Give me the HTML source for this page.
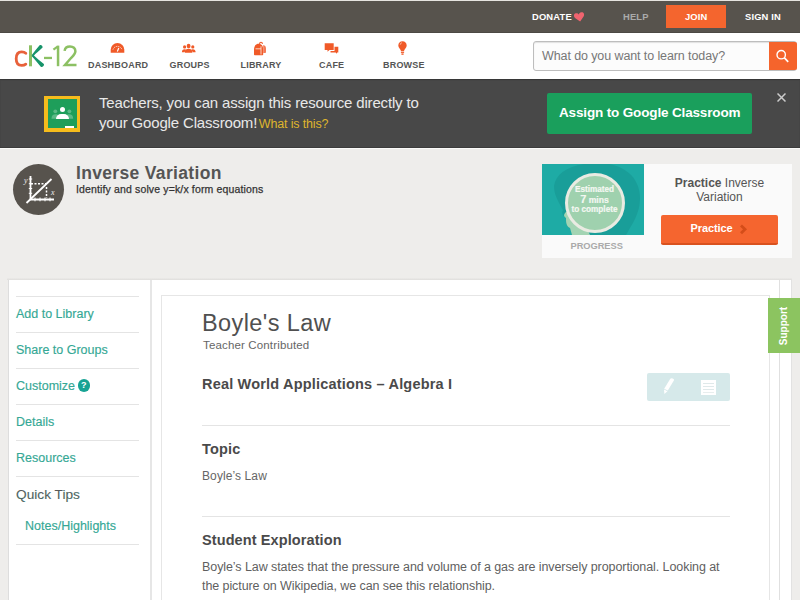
<!DOCTYPE html>
<html><head><meta charset="utf-8">
<style>
*{margin:0;padding:0;box-sizing:border-box}
html,body{width:800px;height:600px;overflow:hidden;background:#eeedeb;font-family:"Liberation Sans",sans-serif}
.a{position:absolute;white-space:nowrap}
#top{position:absolute;left:0;top:0;width:800px;height:33px;background:#57534d;border-top:1px solid #e6e4e0;box-shadow:inset 0 -1px 0 #4c4944;z-index:1}
.t{position:absolute;top:9.8px;font-size:9.4px;letter-spacing:.15px;font-weight:bold;color:#fff;line-height:11px}
#join{position:absolute;left:666px;top:4px;border-radius:0;width:60px;height:23px;background:#f4652e}
#nav{position:absolute;left:0;top:32px;width:800px;height:47px;background:#fff}
.ni{position:absolute;top:28px;font-size:9px;letter-spacing:.2px;font-weight:bold;color:#555;line-height:11px}
.ic{position:absolute}
#search{position:absolute;left:533px;top:41px;width:264px;height:30px;border:1px solid #bdbdbd;border-radius:3px;background:#fcfcfc;box-shadow:inset 0 1px 1px #e0e0e0}
#sbtn{position:absolute;left:769px;top:42px;width:28px;height:28px;background:#f5642c;border-radius:0 2px 2px 0}
#banner{position:absolute;left:0;top:79px;width:800px;height:69px;background:#484848;box-shadow:inset 0 1px 1px #363636,inset 0 -1px 0 #3c3c3c}
#green{position:absolute;left:547px;top:93px;width:205px;height:41px;background:#1a9f5c;border-radius:2px}
.sl{position:absolute;left:16px;font-size:12.5px;color:#35a895;line-height:14px;-webkit-text-stroke:0.15px #35a895}
.hr{position:absolute;height:1px;background:#e4e4e4}
</style></head><body>

<div id="top">
  <div class="t" id="donate" style="left:532px">DONATE</div>
  <svg class="ic" style="left:573.8px;top:11.3px;transform:rotate(-12deg)" width="11" height="10" viewBox="0 0 11 10"><path d="M5.2 9.6 L1.2 5.3 C-0.4 3.5 0.2 0.6 2.7 0.6 C4 0.6 4.8 1.4 5.4 2.3 C6 1.4 6.9 0.8 8.1 0.8 C10.5 0.8 11.3 3.5 9.8 5.2 Z" fill="#f0646f"/></svg>
  <div class="t" id="help" style="left:623px;color:#aaa">HELP</div>
  <div id="join"></div>
  <div class="t" id="jointxt" style="left:685px">JOIN</div>
  <div class="t" id="signin" style="left:745px">SIGN IN</div>
</div>

<div id="nav">
  <!-- logo -->
  <svg class="ic" style="left:10px;top:8px" width="70" height="30" viewBox="10 40 70 30">
    <path d="M25.8 53.2 C24.8 52.3 23.3 51.9 21.7 51.9 C17.9 51.9 16.2 55 16.2 58.8 C16.2 62.6 17.9 65.4 21.7 65.4 C23.3 65.4 24.8 65 25.8 64.2" stroke="#e8613a" stroke-width="2.8" fill="none" stroke-linecap="round"/>
    <rect x="29" y="45.3" width="3" height="21" fill="#8cc063"/>
    <path d="M39.6 45.3 C40.8 44.5 42.8 45.3 42.6 47.6 C39.5 50.5 35.8 53.5 33.2 56.4 L31.6 55.3 C34 52 36.8 48.5 39.6 45.3 Z" fill="#16936a"/><path d="M31.6 56 L33.1 54.7 C36.5 58 40 61 43.9 64 C44.6 65.5 42.6 67.3 41 66.9 C38 63.5 35 59.5 31.6 56 Z" fill="#16936a"/>
    <rect x="44" y="56.8" width="8" height="2.3" fill="#8cc063"/>
    <rect x="56.8" y="45.6" width="2.5" height="20.6" fill="#8cc063"/>
    <path d="M57.6 46.6 L53.4 49.6" stroke="#8cc063" stroke-width="2.2" fill="none"/>
    <path d="M64.6 50.8 C65 47.8 67.3 46.4 70 46.4 C73.3 46.4 75.4 48.4 75.4 51.2 C75.4 53.8 73.4 55.6 71 58 L65 64.9 L76.5 64.9" stroke="#8cc063" stroke-width="2.5" fill="none" stroke-linejoin="miter"/>
  </svg>

    <div class="ni" id="n1" style="left:88px">DASHBOARD</div>
    <div class="ni" id="n2" style="left:169.5px">GROUPS</div>
  <div class="ni" id="n3" style="left:240.5px">LIBRARY</div>
  <div class="ni" id="n4" style="left:319px">CAFE</div>
  <div class="ni" id="n5" style="left:383px">BROWSE</div>
</div>

<svg class="ic" style="left:100px;top:36px" width="320" height="24" viewBox="100 36 320 24">
  <g fill="#f05a28">
    <path d="M110.7 52.8 V49.8 A6.8 6.8 0 0 1 124.3 49.8 V52.8 Z"/>
    <ellipse cx="188.6" cy="46" rx="1.9" ry="2.3"/>
    <path d="M184.8 52.8 C184.8 49.8 186.2 48.8 188.6 48.8 C191 48.8 192.4 49.8 192.4 52.8Z"/>
    <circle cx="184.6" cy="46.9" r="1.6"/>
    <path d="M181.9 52.3 C181.9 50 182.8 49.2 184.6 49.2 C185.5 49.2 186 49.5 186.2 50 L184.4 52.3Z"/>
    <circle cx="192.8" cy="46.9" r="1.6"/>
    <path d="M195.6 52.3 C195.6 50 194.6 49.2 192.8 49.2 C191.9 49.2 191.4 49.5 191.2 50 L193 52.3Z"/>
    <path d="M254 50 C254 46 255.8 43.8 258.6 43.8 C261.6 43.8 263.2 46 263.2 50 V54.3 C263.2 55 262.7 55.3 262 55.3 H255.2 C254.5 55.3 254 55 254 54.3Z"/>
    <path d="M263.2 45 C265 45.3 266 46.5 266 48.5 V52.3 C266 52.8 265.6 53 265 53 H263.2Z" fill="#f47a55"/>
    <path d="M259.6 43.9 C259.6 41.7 262.4 41.7 262.4 43.9" stroke="#f05a28" stroke-width="1.1" fill="none"/>
    <path d="M324.7 43.3 H333.7 V49.9 H329.5 L327.5 51.8 V49.9 H324.7Z"/>
    <path d="M334.5 46.7 H338.3 V52.5 H337 V53.8 L335.6 52.5 H330.5 V51 H334.5Z"/>
    <path d="M402.5 41.3 C400 41.3 398.3 43.2 398.3 45.5 C398.3 47.8 400.4 49 401 51 H404 C404.6 49 406.7 47.8 406.7 45.5 C406.7 43.2 405 41.3 402.5 41.3Z"/>
    <rect x="400.9" y="51.6" width="3.2" height="1.3"/>
    <rect x="401.4" y="53.4" width="2.2" height="1.4"/>
  </g>
  <path d="M113 49.5 A4.8 4.8 0 0 1 122 49.5" stroke="#fff" stroke-width="0.9" stroke-dasharray="1 1" fill="none"/>
  <path d="M117.3 51.5 L118.8 48" stroke="#fff" stroke-width="1.2"/>
  <path d="M255.5 48.8 H261 M261 46.3 V54.5" stroke="#fde0d0" stroke-width="0.9" fill="none"/>
  <path d="M400.3 44.6 C400.3 43.6 401 43 401.8 42.8" stroke="#fcd3c0" stroke-width="0.9" fill="none"/>
</svg>
<div id="search"><div class="a" id="ph" style="left:8px;top:7px;font-size:12.5px;letter-spacing:-0.1px;color:#777">What do you want to learn today?</div></div>
<div id="sbtn"><svg class="ic" style="left:7px;top:7px" width="14" height="14" viewBox="0 0 14 14"><circle cx="5.2" cy="5.7" r="4.2" stroke="#fff" stroke-width="1.4" fill="none"/><path d="M8.2 8.7 L12.2 12.8" stroke="#fff" stroke-width="1.7"/></svg></div>

<div id="banner">
  <div class="a" style="left:44px;top:17px;width:36px;height:35.5px;background:#f6bc1c"></div>
  <div class="a" style="left:48px;top:20px;width:28.5px;height:29px;background:#1e9e5a"></div>
  <svg class="ic" style="left:48px;top:20px" width="29" height="29" viewBox="48 99 29 29"><circle cx="55.3" cy="111.3" r="1.9" fill="#5cb986"/><circle cx="69.4" cy="111.3" r="1.9" fill="#5cb986"/><path d="M51.5 118.8 C51.5 115.5 53 114.3 55.5 114.3 C57 114.3 58 114.8 58.5 115.6 L57 118.8Z M73.2 118.8 C73.2 115.5 71.7 114.3 69.2 114.3 C67.7 114.3 66.7 114.8 66.2 115.6 L67.7 118.8Z" fill="#5cb986"/></svg>
  <div class="a" style="left:59.5px;top:27.5px;width:5px;height:5px;border-radius:50%;background:#fff"></div>
  <div class="a" style="left:56px;top:34.5px;width:12.5px;height:5px;border-radius:6px 6px 0 0;background:#fff"></div>
  <div class="a" style="left:65px;top:47px;width:8.5px;height:2px;background:#fff"></div>
  <div class="a" id="bt" style="left:99px;top:14px;font-size:15px;letter-spacing:-0.16px;color:#e8e8e8;line-height:20px">Teachers, you can assign this resource directly to<br>your Google Classroom!&nbsp;<span style="color:#dfb52d;font-size:12.5px;letter-spacing:-0.15px;margin-left:-2.5px">What is this?</span></div>
  <svg class="ic" style="left:777px;top:14px" width="9" height="9" viewBox="0 0 9 9"><path d="M0.5 0.5 L8.5 8.5 M8.5 0.5 L0.5 8.5" stroke="#ccc" stroke-width="1.5"/></svg>
</div>
<div id="green"><div class="a" id="gt" style="left:12px;top:12px;font-size:13.5px;letter-spacing:-0.15px;font-weight:bold;color:#fff">Assign to Google Classroom</div></div>

<div class="a" style="left:0;top:148px;width:800px;height:1px;background:#fafaf9"></div>
<!-- header -->
<div class="a" style="left:13px;top:164px;width:51px;height:51px;border-radius:50%;background:#57534d"></div>
<svg class="ic" style="left:13px;top:164px" width="51" height="51" viewBox="0 0 51 51">
  <path d="M17.5 12 V35.5 H41" stroke="#fff" stroke-width="1.8" fill="none"/>
  <path d="M13.5 39 L38.5 15" stroke="#fff" stroke-width="1.8" fill="none"/>
  <path d="M18 19.7 H33" stroke="#fff" stroke-width="1.5" stroke-dasharray="2 1.5" fill="none"/>
  <path d="M33.5 23 V34" stroke="#fff" stroke-width="1.5" stroke-dasharray="2 1.5" fill="none"/>
  <path d="M15.8 15 H19.2 M15.8 19.7 H19.2 M15.8 24.5 H19.2 M15.8 29.3 H19.2 M22 33.5 V37.3 M27 33.5 V37.3 M32 33.5 V37.3 M37 33.5 V37.3" stroke="#fff" stroke-width="1" fill="none"/>
  <text x="11" y="19" font-family="Liberation Serif" font-style="italic" font-size="8" fill="#eee">y</text>
  <text x="38" y="31" font-family="Liberation Serif" font-style="italic" font-size="8" fill="#eee">x</text>
</svg>
<div class="a" id="h1" style="left:76px;top:162.5px;font-size:17.5px;letter-spacing:0.33px;font-weight:bold;color:#555">Inverse Variation</div>
<div class="a" id="h2" style="left:76px;top:183px;font-size:10.5px;letter-spacing:0.14px;color:#333;-webkit-text-stroke:0.25px #333">Identify and solve y=k/x form equations</div>

<!-- practice card -->
<div class="a" style="left:542px;top:164px;width:250px;height:94px;background:#fafafa"></div>
<div class="a" style="left:542px;top:164px;width:102px;height:71px;background:#1eaba5;overflow:hidden">
  <svg width="102" height="71" viewBox="542 164 102 71" style="position:absolute;left:0;top:0">
    <path d="M572 235 L570 228 C566 226 566 222 566 218 C563 216 561 213 563 210 C560 204 554 196 554 186 C556 172 572 163 598 163 C622 163 640 176 640 198 C640 214 632 224 626 235Z" fill="#199e99"/>
    <path d="M566 212 C564 214 563 216 566 218 C566 222 566 226 570 228 L572 235 H590 L575 205Z" fill="#a3d4b3"/>
  </svg>
  <div class="a" style="left:22.5px;top:8.5px;width:60.5px;height:60.5px;border-radius:50%;border:3px solid #e9ebe2;background:#9fd1ae"></div>
  <div class="a" style="left:0;top:20.5px;width:105px;text-align:center;font-size:8.2px;font-weight:bold;color:#f4f8f2;line-height:10px;-webkit-text-stroke:0.2px #f4f8f2">Estimated</div>
  <div class="a" style="left:0;top:29.5px;width:105px;text-align:center;font-size:8.6px;font-weight:bold;color:#f4f8f2;line-height:10px;-webkit-text-stroke:0.2px #f4f8f2"><span style="font-size:11px">7</span> mins</div>
  <div class="a" style="left:0;top:41px;width:105px;text-align:center;font-size:8.2px;font-weight:bold;color:#f4f8f2;line-height:10px;-webkit-text-stroke:0.2px #f4f8f2">to complete</div>
</div>
<div class="a" id="prog" style="left:570.5px;top:241px;font-size:9.3px;letter-spacing:-0.05px;font-weight:bold;color:#aaa">PROGRESS</div>
<div class="a" id="pt" style="left:646px;top:176px;width:147px;text-align:center;font-size:12px;color:#555;line-height:14px"><b>Practice</b> Inverse<br>Variation</div>
<div class="a" style="left:661px;top:215px;width:117px;height:30px;background:#f5652f;border-bottom:2px solid #d9521f;border-radius:2px"></div>
<div class="a" id="pbt" style="left:690.5px;top:222px;font-size:11px;letter-spacing:-0.1px;font-weight:bold;color:#fff">Practice</div>
<svg class="ic" style="left:739px;top:224px" width="9" height="11" viewBox="0 0 9 11"><path d="M2 1.5 L6 5.3 L2 9.2" stroke="#d44d19" stroke-width="2.8" fill="none"/></svg>

<!-- sidebar -->
<div class="a" style="left:7px;top:278px;width:785px;height:2px;background:linear-gradient(#ecebe9,#dfdedc)"></div>
<div class="a" style="left:8px;top:280px;width:142px;height:320px;background:#fff;border-left:1px solid #ddd"></div>
<div class="a" style="left:150px;top:280px;width:630px;height:320px;background:#fff;border-left:2px solid #e6e6e6;border-right:1px solid #e0e0e0"></div>
<div class="a" style="left:161px;top:295px;width:609px;height:305px;border:1px solid #e6e6e6;border-bottom:none"></div>
<div class="a" style="left:780px;top:280px;width:12px;height:320px;background:#fff;border-right:1px solid #e2e2e2"></div>

<div class="hr" style="left:16px;top:296px;width:123px"></div>
<div class="sl" id="s1" style="top:307.3px">Add to Library</div>
<div class="hr" style="left:16px;top:332px;width:123px"></div>
<div class="sl" id="s2" style="top:343.3px">Share to Groups</div>
<div class="hr" style="left:16px;top:368px;width:123px"></div>
<div class="sl" id="s3" style="top:379px">Customize</div>
<div class="a" style="left:77.5px;top:379px;width:12.5px;height:12.5px;border-radius:50%;background:#17a394;color:#fff;font-size:9px;font-weight:bold;text-align:center;line-height:12px">?</div>
<div class="hr" style="left:16px;top:404px;width:123px"></div>
<div class="sl" id="s4" style="top:415px">Details</div>
<div class="hr" style="left:16px;top:440px;width:123px"></div>
<div class="sl" id="s5" style="top:451px">Resources</div>
<div class="hr" style="left:16px;top:476px;width:123px"></div>
<div class="sl" id="s6" style="top:488px;font-size:13.7px;color:#585858">Quick Tips</div>
<div class="sl" id="s7" style="left:25px;top:519px">Notes/Highlights</div>
<div class="hr" style="left:16px;top:544px;width:123px"></div>

<!-- main -->
<div class="a" id="m1" style="left:202px;top:310px;font-size:23.5px;letter-spacing:0.4px;color:#505050">Boyle's Law</div>
<div class="a" id="m2" style="left:203px;top:338.6px;font-size:11.5px;letter-spacing:0.15px;color:#666">Teacher Contributed</div>
<div class="a" id="m3" style="left:202px;top:375.5px;font-size:14.5px;letter-spacing:0.19px;font-weight:bold;color:#4a4a4a">Real World Applications – Algebra I</div>
<div class="a" style="left:647px;top:373px;width:83px;height:28px;background:#d6e9ea;border-radius:2px"></div>
<svg class="ic" style="left:660px;top:376px" width="16" height="20" viewBox="660 376 16 20"><path d="M670.3 378.8 C671 377.8 672.6 378.2 673.6 379 C674.2 379.6 674 380.3 673.7 380.8 L667.8 390.6 L664.2 388.8 Z" fill="#fff"/><path d="M664 389.4 L667.5 391.2 L664.4 394 Z" fill="#fff"/></svg>
<div class="a" style="left:701px;top:380px;width:15px;height:14.5px;background:#fff"></div>
<div class="a" style="left:703px;top:383px;width:11px;height:1px;background:#dfe9ea"></div>
<div class="a" style="left:703px;top:386px;width:11px;height:1px;background:#dfe9ea"></div>
<div class="a" style="left:703px;top:389px;width:11px;height:1px;background:#dfe9ea"></div>
<div class="a" style="left:703px;top:392px;width:11px;height:1px;background:#e8eeee"></div>
<div class="hr" style="left:202px;top:425px;width:528px"></div>
<div class="a" id="m4" style="left:202px;top:441.4px;letter-spacing:0.2px;font-size:14.5px;font-weight:bold;color:#4a4a4a">Topic</div>
<div class="a" id="m5" style="left:202px;top:469px;font-size:12px;letter-spacing:0.1px;color:#666">Boyle’s Law</div>
<div class="hr" style="left:202px;top:516px;width:528px"></div>
<div class="a" id="m6" style="left:202px;top:532px;font-size:14.5px;letter-spacing:0.1px;font-weight:bold;color:#4a4a4a">Student Exploration</div>
<div class="a" id="m7" style="left:202px;top:557.5px;font-size:12.5px;letter-spacing:-0.08px;color:#5f5f5f;line-height:19.5px">Boyle’s Law states that the pressure and volume of a gas are inversely proportional. Looking at<br>the picture on Wikipedia, we can see this relationship.</div>

<!-- support tab -->
<div class="a" style="left:768px;top:298px;width:32px;height:55px;background:#8cc460"></div>
<div class="a" id="sup" style="left:763px;top:320px;width:42px;height:12px;transform:rotate(-90deg);font-size:10px;font-weight:bold;color:#fff;text-align:center;line-height:12px">Support</div>

</body></html>
